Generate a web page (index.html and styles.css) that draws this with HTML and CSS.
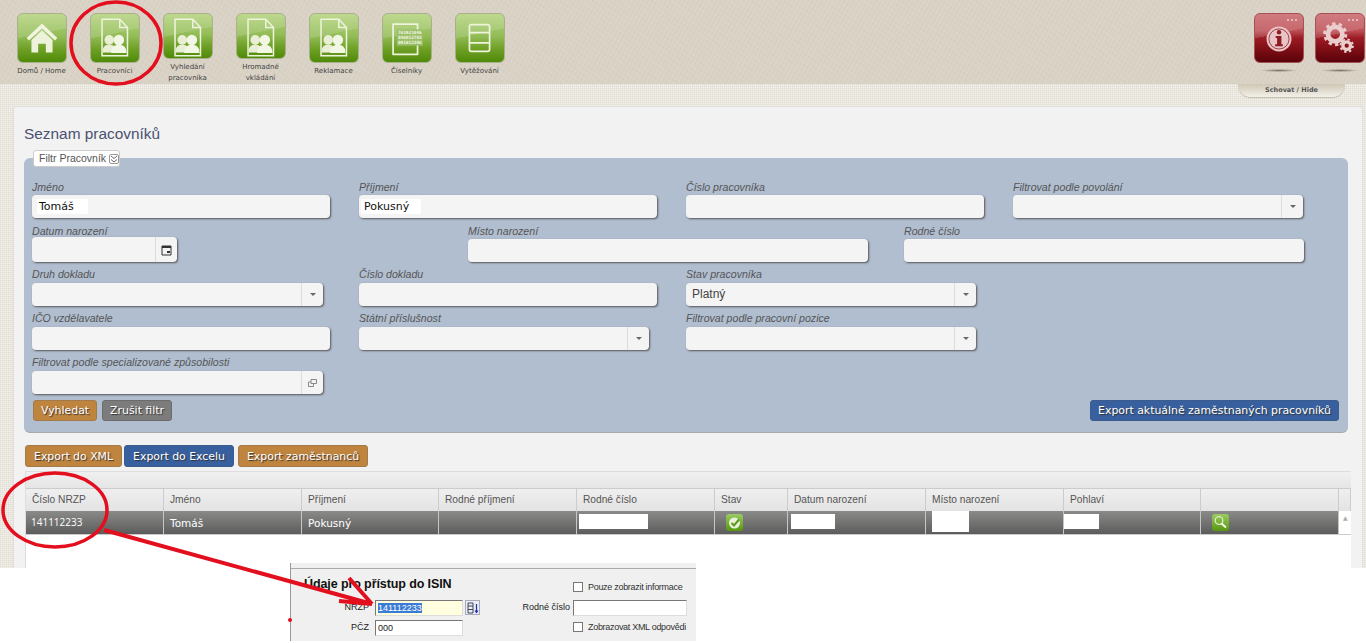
FILE: index.html
```html
<!DOCTYPE html>
<html lang="cs">
<head>
<meta charset="utf-8">
<title>Seznam pracovníků</title>
<link rel="stylesheet" href="styles.css">
</head>
<body>
<svg class="defs" width="0" height="0">
  <symbol id="sheet" viewBox="0 0 50 50">
    <path d="M11.500 5.500H30L38 14V43.500H11.500Z" fill="none" stroke="#eef3dc" stroke-width="1.600"/>
    <path d="M30 5.500V14H38" fill="none" stroke="#eef3dc" stroke-width="1.600"/>
    <circle cx="19" cy="27" r="5" fill="#e8efd4"/>
    <path d="M12 40c0-6 2.500-7.500 7-8.500 4.500 1 7 2.500 7 8.500Z" fill="#e8efd4"/>
    <circle cx="29" cy="27" r="5.500" fill="#f2f6e4"/>
    <path d="M21 40.500c0-6.500 3.500-8 8-9 4.500 1 8 2.500 8 9Z" fill="#f2f6e4"/>
  </symbol>
</svg>
<div class="page">
  <header class="top">
    <nav class="nav">
      <a class="nav-item"><span class="tile"><svg viewBox="0 0 50 50"><path d="M25 10 9 25l2.500 2.500L25 15l13.500 12.500L41 25Z" fill="#f0f4e0"/><path d="M14 27 25 17l11 10v13H29V31H21v9H14Z" fill="#edf2da"/></svg></span><span class="nav-label">Domů / Home</span></a>
      <a class="nav-item"><span class="tile"><svg><use href="#sheet"/></svg></span><span class="nav-label">Pracovníci</span></a>
      <a class="nav-item"><span class="tile"><svg><use href="#sheet"/></svg></span><span class="nav-label">Vyhledání<br>pracovníka</span></a>
      <a class="nav-item"><span class="tile"><svg><use href="#sheet"/></svg></span><span class="nav-label">Hromadné<br>vkládání</span></a>
      <a class="nav-item"><span class="tile"><svg><use href="#sheet"/></svg></span><span class="nav-label">Reklamace</span></a>
      <a class="nav-item"><span class="tile"><svg viewBox="0 0 50 50"><path d="M36 28v14H10.500V10.500H36v6" fill="none" stroke="#eef3dc" stroke-width="1.800" stroke-linejoin="round"/><rect x="14.500" y="16" width="27" height="17" fill="#9bbf68"/><text class="digits" x="15.500" y="21">761921046</text><text class="digits" x="15.500" y="26">840852783</text><text class="digits" x="15.500" y="31">091012386</text></svg></span><span class="nav-label">Číselníky</span></a>
      <a class="nav-item"><span class="tile"><svg viewBox="0 0 50 50"><rect x="14" y="11" width="21" height="28" rx="2" fill="none" stroke="#eef3dc" stroke-width="1.800"/><path d="M14 19.500h21M14 30h21" stroke="#eef3dc" stroke-width="1.800"/></svg></span><span class="nav-label">Vytěžování</span></a>
    </nav>
    <div class="tools">
      <div class="tool"><span class="tile tile-red"><i class="dots"></i><svg viewBox="0 0 50 50"><circle cx="25" cy="26" r="13" fill="#e9c4c6"/><circle cx="25" cy="26" r="10.500" fill="none" stroke="#8e1a22" stroke-width=".8"/><circle cx="25" cy="19" r="2.300" fill="#8e1a22"/><path d="M21.500 23h6v8.500h1.500v2h-8v-2h2V25h-1.500Z" fill="#8e1a22"/></svg></span></div>
      <div class="tool"><span class="tile tile-red"><i class="dots"></i><svg viewBox="0 0 50 50"><circle cx="20" cy="21" r="7.500" fill="none" stroke="#eacdcd" stroke-width="5"/><circle cx="20" cy="21" r="11" fill="none" stroke="#eacdcd" stroke-width="3" stroke-dasharray="3.500 3.400"/><circle cx="32" cy="33" r="4" fill="none" stroke="#eacdcd" stroke-width="3.500"/><circle cx="32" cy="33" r="6.500" fill="none" stroke="#eacdcd" stroke-width="2" stroke-dasharray="2.500 2.600"/></svg></span></div>
    </div>
  </header>
  <div class="hide-tab">Schovat / Hide</div>
  <main class="panel">
    <h1 class="title">Seznam pracovníků</h1>
    <section class="filter">
      <div class="legend">Filtr Pracovník <span class="chev"><svg width="8" height="8" viewBox="0 0 8 8"><path d="M1 1l3 2.500L7 1M1 4.500 4 7l3-2.500" fill="none" stroke="#666"/></svg></span></div>
      <div class="row row-four">
        <label class="field w298"><span>Jméno</span><b class="input"><em class="val">Tomáš</em></b></label>
        <label class="field w298"><span>Příjmení</span><b class="input"><em class="val val-wide">Pokusný</em></b></label>
        <label class="field w298"><span>Číslo pracovníka</span><b class="input"></b></label>
        <label class="field w290"><span>Filtrovat podle povolání</span><b class="input has-btn"><i class="btn-drop"></i></b></label>
      </div>
      <div class="row row-three">
        <label class="field w145"><span>Datum narození</span><b class="input has-btn input-date"><i class="btn-cal"><svg width="11" height="12" viewBox="0 0 11 12"><path d="M1 2h9v9H1Z" fill="none" stroke="#333"/><path d="M1 2h9v2H1Z" fill="#333"/><rect x="6" y="7" width="3" height="2" fill="#333"/></svg></i></b></label>
        <label class="field w400"><span>Místo narození</span><b class="input"></b></label>
        <label class="field w400"><span>Rodné číslo</span><b class="input"></b></label>
      </div>
      <div class="row row-four row-tight">
        <label class="field w291"><span>Druh dokladu</span><b class="input has-btn"><i class="btn-drop"></i></b></label>
        <label class="field w298"><span>Číslo dokladu</span><b class="input"></b></label>
        <label class="field w290"><span>Stav pracovníka</span><b class="input has-btn"><em class="plain">Platný</em><i class="btn-drop"></i></b></label>
      </div>
      <div class="row row-four row-tight">
        <label class="field w298"><span>IČO vzdělavatele</span><b class="input"></b></label>
        <label class="field w290"><span>Státní příslušnost</span><b class="input has-btn"><i class="btn-drop"></i></b></label>
        <label class="field w290"><span>Filtrovat podle pracovní pozice</span><b class="input has-btn"><i class="btn-drop"></i></b></label>
      </div>
      <div class="row row-last row-tight">
        <label class="field w291"><span>Filtrovat podle specializované způsobilosti</span><b class="input has-btn"><i class="btn-pop"><svg width="9" height="8" viewBox="0 0 9 8"><path d="M3 .5h5.500v4H3ZM.5 3H3M.5 3v4.500h5V4.500" fill="none" stroke="#888"/></svg></i></b></label>
      </div>
      <div class="actions">
        <div class="btn-group">
          <button class="btn orange">Vyhledat</button>
          <button class="btn grey">Zrušit filtr</button>
        </div>
        <button class="btn blue">Export aktuálně zaměstnaných pracovníků</button>
      </div>
    </section>
    <div class="exports">
      <button class="btn orange">Export do XML</button>
      <button class="btn blue">Export do Excelu</button>
      <button class="btn orange exp-last">Export zaměstnanců</button>
    </div>
    <section class="grid-wrap">
      <div class="grid-tools"></div>
      <div class="grid grid-head">
        <span>Číslo NRZP</span><span>Jméno</span><span>Příjmení</span><span>Rodné příjmení</span><span>Rodné číslo</span><span>Stav</span><span>Datum narození</span><span>Místo narození</span><span>Pohlaví</span><span></span><span></span>
      </div>
      <div class="grid grid-row">
        <span class="cell-num">141112233</span><span>Tomáš</span><span>Pokusný</span><span></span>
        <span class="cell-mask"><i class="mask m69"></i></span>
        <span><i class="mini"><svg width="17" height="17" viewBox="0 0 17 17"><circle cx="8.500" cy="9" r="5.500" fill="#eaf2dc"/><path d="M5.500 9l2.500 2.500 5-6" fill="none" stroke="#5b9a16" stroke-width="2"/></svg></i></span>
        <span class="cell-mask"><i class="mask m44"></i></span>
        <span class="cell-mask"><i class="mask m37"></i></span>
        <span class="cell-mask cell-flush"><i class="mask m35"></i></span>
        <span><i class="mini"><svg width="17" height="17" viewBox="0 0 17 17"><circle cx="7" cy="6.500" r="3.800" fill="none" stroke="#dcebc8" stroke-width="1.300"/><path d="M9.500 9.500l4.500 4" stroke="#f4f8ec" stroke-width="2"/></svg></i></span>
        <span class="scroll-cell">▲</span>
      </div>
    </section>
  </main>
</div>
<aside class="paste">
  <strong class="paste-title">Údaje pro přístup do ISIN</strong>
  <div class="check-line check-first"><i class="check"></i>Pouze zobrazit informace</div>
  <span class="p-label">NRZP</span>
  <div class="p-input-wrap"><span class="p-input yellow"><mark>141112233</mark></span><i class="p-btn"><svg width="12" height="12" viewBox="0 0 12 12"><path d="M1 1h5v10H1ZM1 4h5M1 7.500h5" fill="none" stroke="#445"/><path d="M9.500 2v8M8 8.500l1.500 2 1.500-2" fill="none" stroke="#23a" stroke-width="1.200"/></svg></i></div>
  <span class="p-label">Rodné číslo</span>
  <span class="p-input p-wide"></span>
  <span class="p-label">PČZ</span>
  <div class="p-input-wrap"><span class="p-input">000</span></div>
  <span></span>
  <div class="check-line"><i class="check"></i>Zobrazovat XML odpovědi</div>
</aside>
<svg class="marks" width="1366" height="643" viewBox="0 0 1366 643">
  <g fill="none" stroke="#e30f1e" stroke-width="3.500">
    <ellipse cx="116" cy="43" rx="45" ry="41"/>
    <ellipse cx="55" cy="510" rx="52" ry="37"/>
    <path stroke-width="4" d="M104 530 372 604M339 601 372 604M349 578 372 604"/>
  </g>
  <circle cx="290" cy="620" r="2" fill="#e30f1e"/>
</svg>
</body>
</html>
```
FILE: styles.css
```css
* { box-sizing: border-box; }
html, body { margin: 0; padding: 0; }
body {
  width: 1366px;
  height: 643px;
  overflow: hidden;
  position: relative;
  background: #fff;
  font-family: "Liberation Sans", Arial, sans-serif;
  color: #444;
}
.defs { display: block; height: 0; }
.page {
  height: 568px;
  overflow: hidden;
  background-color: #ebe8df;
  background-image:
    repeating-linear-gradient(0deg, rgba(255,255,255,.35) 0 1px, transparent 1px 2px),
    repeating-linear-gradient(90deg, rgba(150,140,120,.12) 0 1px, transparent 1px 2px);
}
.top {
  height: 84px;
  padding: 13px 1px 0 5px;
  display: flex;
  justify-content: space-between;
  background-color: #d9d2c5;
  background-image:
    repeating-linear-gradient(37deg, rgba(255,255,255,.05) 0 2px, transparent 2px 5px),
    repeating-linear-gradient(-61deg, rgba(120,105,80,.04) 0 1px, transparent 1px 4px);
}
.nav { display: flex; }
.nav-item {
  width: 73px;
  display: flex;
  flex-direction: column;
  align-items: center;
}
.tile {
  width: 50px;
  height: 50px;
  border-radius: 6px;
  display: block;
  position: relative;
  overflow: hidden;
  border: 1px solid #a8b18b;
  background:
    linear-gradient(168deg, rgba(255,255,255,.13) 0 42%, transparent 42%),
    linear-gradient(180deg, #b4d37e 0%, #94bd58 45%, #6fa127 72%, #4f8a08 100%);
}
.tile svg { width: 48px; height: 48px; display: block; }
.digits {
  font: bold 4.600px "DejaVu Sans Mono", monospace;
  fill: #f2f6e4;
}
.nav-label {
  margin-top: 3px;
  font: 7px/11px "DejaVu Sans", sans-serif;
  text-align: center;
  color: #444;
  white-space: nowrap;
}
.tools { display: flex; gap: 11px; }
.tool::after {
  content: "";
  display: block;
  width: 38px;
  height: 3px;
  margin: 6px auto 0;
  background: radial-gradient(closest-side, rgba(70,60,50,.65), rgba(70,60,50,0));
}
.tile-red {
  border-color: #a45258;
  background:
    linear-gradient(168deg, rgba(255,255,255,.14) 0 42%, transparent 42%),
    linear-gradient(180deg, #c8666b 0%, #bd4f55 35%, #9c1b24 50%, #7c0d15 75%, #5a0209 100%);
}
.dots {
  position: absolute;
  right: 5px;
  top: 5px;
  width: 11px;
  height: 2px;
  background: repeating-linear-gradient(90deg, #e8b8b8 0 2px, transparent 2px 4px);
}
.hide-tab {
  margin: 0 21px 0 auto;
  width: 107px;
  height: 13px;
  border-radius: 0 0 22px 22px;
  background: linear-gradient(180deg, #cfc7b5, #f3f0e9);
  box-shadow: 0 1px 1px rgba(150,140,120,.5);
  font: bold 6.500px/13px "DejaVu Sans", sans-serif;
  text-align: center;
  color: #555;
}
.panel {
  width: 1350px;
  height: 462px;
  margin: 9px 0 0 13px;
  padding: 0 12px 0 10px;
  background: #f2f2f2;
  border: 1px solid #dfdfdc;
  border-bottom: 0;
  border-radius: 4px 4px 0 0;
}
.title {
  margin: 0;
  height: 51px;
  padding-top: 17px;
  font: 400 15.400px/20px "Liberation Sans", sans-serif;
  color: #4b5170;
}
.filter {
  width: 1324px;
  height: 275px;
  padding: 0 9px 0 8px;
  background: #b1bed0;
  border-radius: 6px;
  border-bottom: 1px solid #a9a9a9;
}
.legend {
  width: 87px;
  height: 17px;
  margin: 0 0 6px 1px;
  position: relative;
  top: -8px;
  display: flex;
  align-items: center;
  gap: 3px;
  background: #fff;
  border: 1px solid #ccc;
  border-radius: 3px;
  font: 10.500px/15px "Liberation Sans", sans-serif;
  padding-left: 5px;
  color: #555;
  white-space: nowrap;
}
.chev {
  display: flex;
  align-items: center;
  justify-content: center;
  width: 10px;
  height: 10px;
  border: 1px solid #999;
  border-radius: 2px;
}
.row { display: flex; height: 44px; }
.row-four .field { margin-right: 29px; }
.row-four .w290 { margin-right: 37px; }
.row-four .w291 { margin-right: 36px; }
.row-three .w145 { margin-right: 291px; }
.row-three .w400 { margin-right: 36px; }
.row-last { height: 37px; }
.field { display: block; flex: none; }
.field > span {
  display: block;
  height: 14px;
  font: italic 10.600px/13px "Liberation Sans", sans-serif;
  color: #555;
  white-space: nowrap;
}
.row-tight .field > span { margin-top: -1px; height: 15px; }
.w145 { width: 145px; }
.w290 { width: 290px; }
.w291 { width: 291px; }
.w298 { width: 298px; }
.w400 { width: 400px; }
.input {
  display: flex;
  align-items: center;
  justify-content: flex-start;
  height: 23px;
  padding-left: 5px;
  background: #f4f4f4;
  border-radius: 4px;
  box-shadow: 1px 1px 2px #555;
  font-weight: 400;
}
.input-date { height: 25px; margin-top: -2px; }
.val {
  font: 400 11px/15px "DejaVu Sans", sans-serif;
  color: #111;
  background: #fff;
  width: 51px;
  padding-left: 2px;
}
.val-wide { width: 60px; padding-left: 3px; margin-left: -3px; }
.plain {
  font: 400 12px/15px "Liberation Sans", sans-serif;
  padding-left: 1px;
  color: #444;
}
.has-btn { justify-content: flex-end; }
.has-btn .plain { margin-right: auto; }
.btn-drop, .btn-cal, .btn-pop {
  width: 22px;
  height: 100%;
  border-left: 1px solid #ddd;
  display: flex;
  align-items: center;
  justify-content: center;
}
.btn-drop::after {
  content: "";
  border: 3px solid transparent;
  border-top-color: #666;
  border-bottom: 0;
}
.actions { display: flex; justify-content: space-between; margin-top: 6px; margin-left: 1px; }
.btn-group { display: flex; gap: 5px; }
.btn {
  height: 21px;
  padding: 0 7px;
  border-radius: 3px;
  font: 10.900px/19px "DejaVu Sans", sans-serif;
  color: #fff;
  text-shadow: 1px 1px 1px #333;
  white-space: nowrap;
}
.orange { background: #bf843e; border: 1px solid #a37a4a; }
.grey { background: #7c7c7c; border: 1px solid #6b6b6b; }
.blue { background: #38609f; border: 1px solid #3a5c8e; }
.exports {
  display: flex;
  gap: 2px;
  margin: 12px 0 0 1px;
}
.exports .btn { height: 22px; padding: 0 8px; }
.exp-last { margin-left: 2px; }
.grid-wrap {
  width: 1326px;
  margin: 4px 0 0 1px;
  background: #fff;
  height: 97px;
  border-left: 1px solid #ddd;
  border-top: 1px solid #ddd;
}
.grid-tools { height: 17px; background: linear-gradient(180deg, #f1f0f0, #e6e5e5); border-bottom: 1px solid #ccc; }
.grid {
  display: grid;
  grid-template-columns: 138px 138px 137px 138px 138px 73px 138px 138px 137px 138px 1fr;
}
.grid-head {
  height: 22px;
  background: linear-gradient(180deg, #f0efef, #e4e3e3);
  font: 10.200px/21px "Liberation Sans", sans-serif;
  color: #555;
}
.grid-head span { padding-left: 6px; border-right: 1px solid #ccc; }
.grid-row {
  height: 24px;
  background: linear-gradient(180deg, #8a8a88, #5c5c5c);
  font: 10.500px/24px "DejaVu Sans", sans-serif;
  color: #fff;
  border-bottom: 1px solid #ccc;
}
.grid-row > span { padding-left: 6px; border-right: 1px solid #c6c6c6; overflow: hidden; }
.grid-row .cell-num { font: 10px/22px "Open Sans", sans-serif; padding-left: 5px; }
.grid-row .cell-mask { padding: 3px 0 0 2px; }
.grid-row .cell-mask:nth-child(7) { padding-left: 3px; }
.grid-row .cell-mask:nth-child(8) { padding: 0 0 0 6px; }
.grid-row .cell-flush { padding-left: 0; }
.mask { display: block; background: #fff; height: 15px; }
.m69 { width: 69px; }
.m44 { width: 44px; }
.m37 { width: 37px; height: 21px; }
.m35 { width: 35px; }
.mini {
  display: block;
  width: 17px;
  height: 17px;
  margin: 3px 0 0 5px;
  border-radius: 3px;
  background: linear-gradient(180deg, #9ccb62, #57960f);
}
.mini svg { display: block; }
.grid-row .scroll-cell {
  background: #fff;
  border: 0;
  color: #aaa;
  font-size: 6px;
  line-height: 14px;
  padding-left: 4px;
}
.paste {
  position: absolute;
  left: 290px;
  top: 563px;
  width: 406px;
  height: 78px;
  background: #f0f0f0;
  border-left: 1px solid #999;
  display: grid;
  grid-template-columns: 81px 108px 93px 1fr;
  grid-template-rows: 32px 20px 20px;
  padding-top: 5px;
  align-items: start;
  font: 9px/14px "Liberation Sans", sans-serif;
  color: #222;
}
.paste::before {
  content: "";
  position: absolute;
  left: 0;
  right: 0;
  top: 5px;
  border-top: 1px solid #aaa;
}
.paste-title {
  grid-column: 1 / 4;
  padding: 8px 0 0 13px;
  font: bold 12.500px/16px "Liberation Sans", sans-serif;
  letter-spacing: -.1px;
  color: #111;
}
.check-line {
  display: flex;
  align-items: center;
  gap: 5px;
  letter-spacing: -.3px;
  white-space: nowrap;
  color: #333;
}
.check-first { padding-top: 12px; }
.check { display: block; width: 10px; height: 10px; background: #fff; border: 1px solid #777; }
.p-label { text-align: right; padding-right: 3px; }
.p-input-wrap { display: flex; gap: 2px; margin-left: 3px; }
.p-input {
  display: block;
  width: 88px;
  height: 16px;
  padding: 1px 2px;
  background: #fff;
  border: 1px solid #777;
  border-right-color: #ddd;
  border-bottom-color: #ddd;
  font: 9px/13px "Liberation Sans", sans-serif;
}
.yellow { background: #ffffe0; }
.yellow mark { background: #3a7bd5; color: #fff; }
.p-wide { width: 114px; }
.p-btn { display: flex; align-items: center; justify-content: center; width: 15px; height: 15px; background: #e8eef8; border: 1px solid #aab; }
.marks { position: absolute; left: 0; top: 0; pointer-events: none; }
```
